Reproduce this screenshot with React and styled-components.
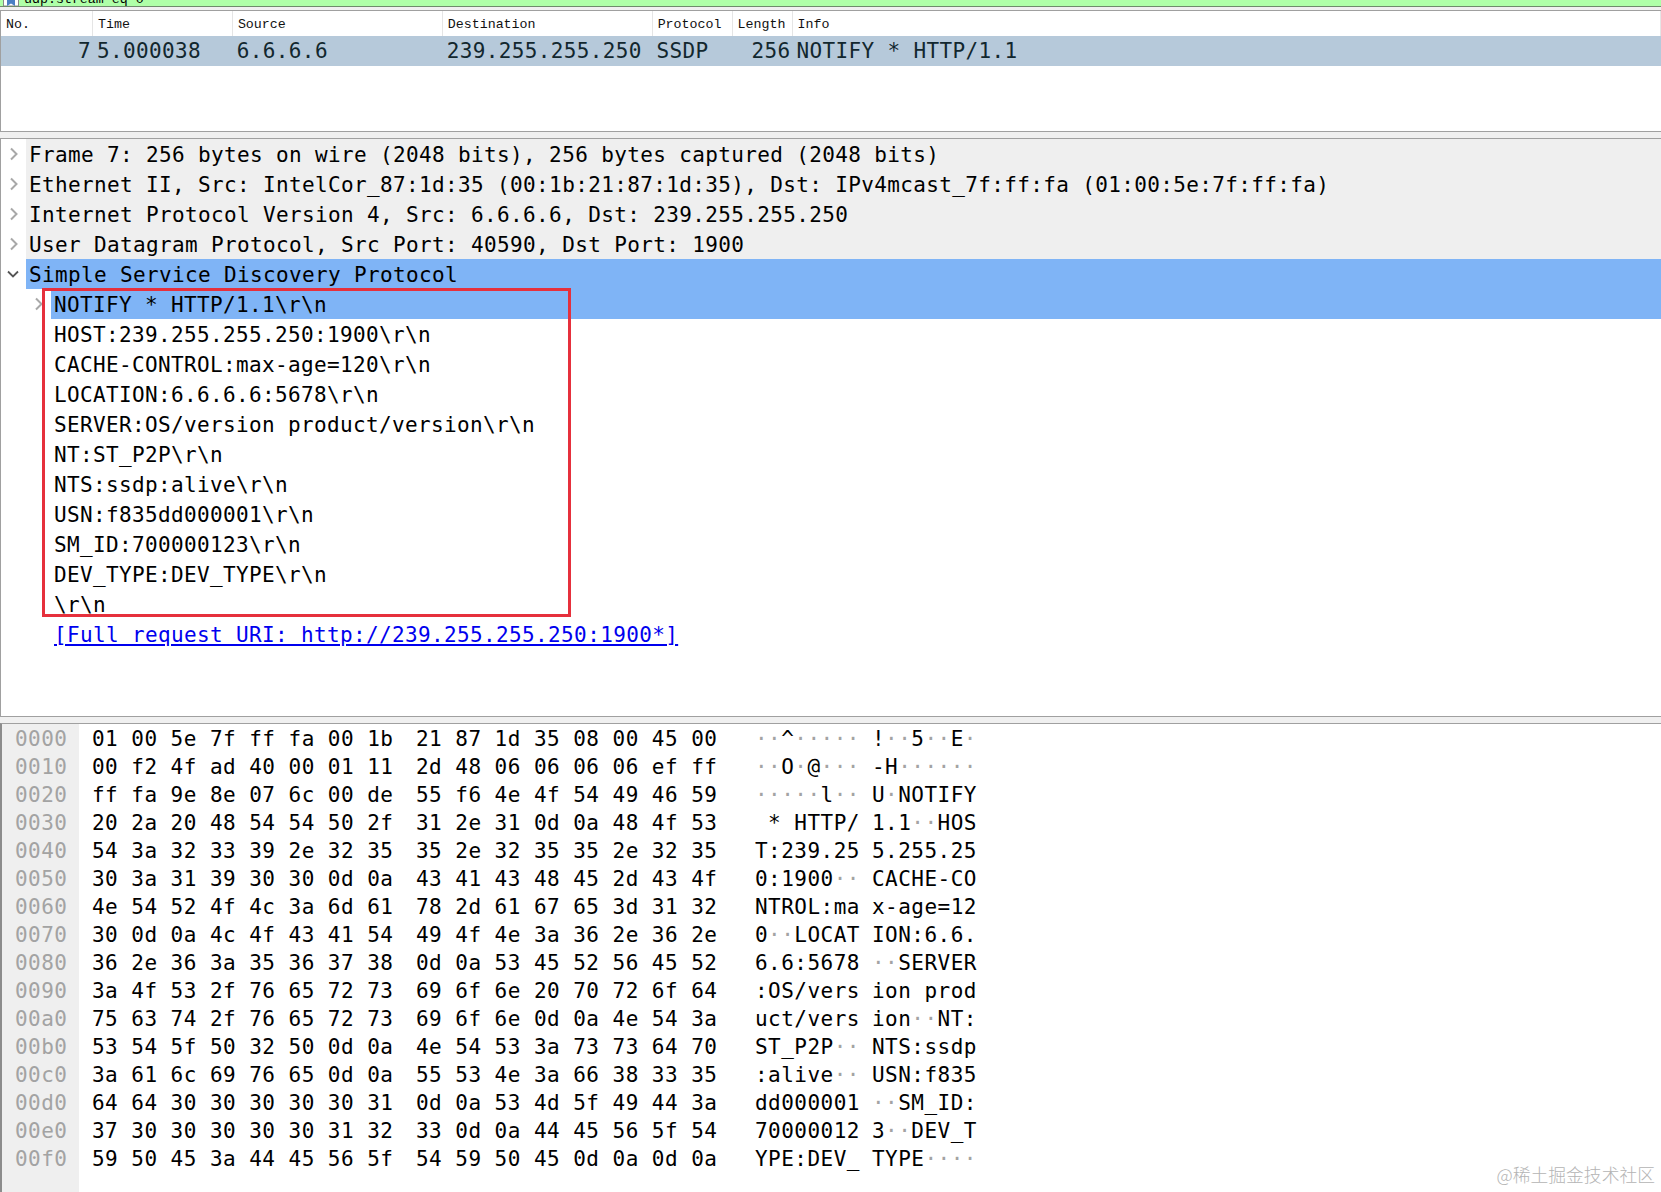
import React from 'react'
import styled, { createGlobalStyle } from 'styled-components'

const MONO = `'DejaVu Sans Mono', 'Liberation Mono', monospace`

const columns = [
  { label: 'No.', width: 92, value: '7', right: true },
  { label: 'Time', width: 140, value: '5.000038' },
  { label: 'Source', width: 210, value: '6.6.6.6' },
  { label: 'Destination', width: 210, value: '239.255.255.250' },
  { label: 'Protocol', width: 80, value: 'SSDP' },
  { label: 'Length', width: 60, value: '256', right: true },
  { label: 'Info', width: 869, value: 'NOTIFY * HTTP/1.1' },
]

const topRows = [
  'Frame 7: 256 bytes on wire (2048 bits), 256 bytes captured (2048 bits)',
  'Ethernet II, Src: IntelCor_87:1d:35 (00:1b:21:87:1d:35), Dst: IPv4mcast_7f:ff:fa (01:00:5e:7f:ff:fa)',
  'Internet Protocol Version 4, Src: 6.6.6.6, Dst: 239.255.255.250',
  'User Datagram Protocol, Src Port: 40590, Dst Port: 1900',
]

const headerLines = [
  'HOST:239.255.255.250:1900\\r\\n',
  'CACHE-CONTROL:max-age=120\\r\\n',
  'LOCATION:6.6.6.6:5678\\r\\n',
  'SERVER:OS/version product/version\\r\\n',
  'NT:ST_P2P\\r\\n',
  'NTS:ssdp:alive\\r\\n',
  'USN:f835dd000001\\r\\n',
  'SM_ID:700000123\\r\\n',
  'DEV_TYPE:DEV_TYPE\\r\\n',
  '\\r\\n',
]

const hexRows = [
  ['0000', '01 00 5e 7f ff fa 00 1b', '21 87 1d 35 08 00 45 00', '··^·····', '!··5··E·'],
  ['0010', '00 f2 4f ad 40 00 01 11', '2d 48 06 06 06 06 ef ff', '··O·@···', '-H······'],
  ['0020', 'ff fa 9e 8e 07 6c 00 de', '55 f6 4e 4f 54 49 46 59', '·····l··', 'U·NOTIFY'],
  ['0030', '20 2a 20 48 54 54 50 2f', '31 2e 31 0d 0a 48 4f 53', ' * HTTP/', '1.1··HOS'],
  ['0040', '54 3a 32 33 39 2e 32 35', '35 2e 32 35 35 2e 32 35', 'T:239.25', '5.255.25'],
  ['0050', '30 3a 31 39 30 30 0d 0a', '43 41 43 48 45 2d 43 4f', '0:1900··', 'CACHE-CO'],
  ['0060', '4e 54 52 4f 4c 3a 6d 61', '78 2d 61 67 65 3d 31 32', 'NTROL:ma', 'x-age=12'],
  ['0070', '30 0d 0a 4c 4f 43 41 54', '49 4f 4e 3a 36 2e 36 2e', '0··LOCAT', 'ION:6.6.'],
  ['0080', '36 2e 36 3a 35 36 37 38', '0d 0a 53 45 52 56 45 52', '6.6:5678', '··SERVER'],
  ['0090', '3a 4f 53 2f 76 65 72 73', '69 6f 6e 20 70 72 6f 64', ':OS/vers', 'ion prod'],
  ['00a0', '75 63 74 2f 76 65 72 73', '69 6f 6e 0d 0a 4e 54 3a', 'uct/vers', 'ion··NT:'],
  ['00b0', '53 54 5f 50 32 50 0d 0a', '4e 54 53 3a 73 73 64 70', 'ST_P2P··', 'NTS:ssdp'],
  ['00c0', '3a 61 6c 69 76 65 0d 0a', '55 53 4e 3a 66 38 33 35', ':alive··', 'USN:f835'],
  ['00d0', '64 64 30 30 30 30 30 31', '0d 0a 53 4d 5f 49 44 3a', 'dd000001', '··SM_ID:'],
  ['00e0', '37 30 30 30 30 30 31 32', '33 0d 0a 44 45 56 5f 54', '70000012', '3··DEV_T'],
  ['00f0', '59 50 45 3a 44 45 56 5f', '54 59 50 45 0d 0a 0d 0a', 'YPE:DEV_', 'TYPE····'],
]

const GlobalStyle = createGlobalStyle`
  html, body {
    margin: 0;
    padding: 0;
    background: #fff;
  }
`

const Window = styled.div`
  position: relative;
  width: 1661px;
  height: 1192px;
  overflow: hidden;
  display: flex;
  flex-direction: column;
  background: #f0f0f0;
  font-family: ${MONO};
  color: #000;
`

const FilterBar = styled.div`
  height: 6px;
  display: flex;
  align-items: flex-end;
  gap: 5px;
  padding-left: 3px;
  overflow: hidden;
  background: #afffa8;
  border-bottom: 1px solid #6f8a6c;
  font: 13.3px/13px 'Liberation Mono', monospace;
`

const FilterFlag = styled.svg`
  flex: none;
  width: 16px;
  height: 6px;
`

const PacketList = styled.section`
  margin-top: 3px;
  height: 120px;
  flex: none;
  background: #fff;
  border-top: 1px solid #a0a0a0;
  border-bottom: 1px solid #a0a0a0;
  border-left: 1px solid #a0a0a0;
`

const HeaderRow = styled.div`
  display: flex;
  height: 25px;
`

const HeaderCell = styled.div`
  box-sizing: border-box;
  width: ${p => p.$width}px;
  padding-left: 5px;
  border-right: 1px solid #e5e5e5;
  font: 13.3px/27px 'Liberation Mono', monospace;
  color: #111;
`

const PacketRow = styled.div`
  display: flex;
  height: 30px;
  background: #b6c9da;
  color: #12272e;
`

const PacketCell = styled.div`
  box-sizing: border-box;
  width: ${p => p.$width}px;
  padding: ${p => (p.$right ? '0 2px 0 0' : '0 0 0 4px')};
  text-align: ${p => (p.$right ? 'right' : 'left')};
  white-space: pre;
  font-size: 21px;
  letter-spacing: 0.36px;
  line-height: 30px;
`

const Details = styled.section`
  margin-top: 6px;
  height: 577px;
  flex: none;
  background: #fff;
  border-top: 1px solid #a0a0a0;
  border-bottom: 1px solid #a0a0a0;
  border-left: 1px solid #a0a0a0;
`

const TreeRow = styled.div`
  display: flex;
  align-items: center;
  height: 30px;
`

const Gutter = styled.div`
  flex: none;
  width: ${p => p.$width}px;
  display: flex;
  justify-content: flex-end;
  padding-right: ${p => p.$pad}px;
  box-sizing: border-box;
`

const Arrow = styled.svg`
  width: 10px;
  height: 14px;
  fill: none;
  stroke: #a8a8a8;
  stroke-width: 2;
`

const DownArrow = styled(Arrow)`
  width: 12px;
  stroke: #555;
  stroke-width: 1.8;
`

const Label = styled.div`
  flex: 1;
  height: 30px;
  padding-left: ${p => p.$pad}px;
  background: ${p => (p.$selected ? '#7fb4f6' : p.$top ? '#efefef' : 'transparent')};
  white-space: pre;
  font-size: 21px;
  letter-spacing: 0.36px;
  line-height: 33px;
`

const FullUri = styled.span`
  color: #0000ee;
  text-decoration: underline;
`

const RedBox = styled.div`
  position: absolute;
  left: 42px;
  top: 288px;
  width: 529px;
  height: 329px;
  box-sizing: border-box;
  border: 3px solid #e6303c;
  pointer-events: none;
`

const HexPane = styled.section`
  flex: 1;
  margin-top: 6px;
  display: flex;
  background: #fff;
  border-top: 1px solid #a0a0a0;
  border-left: 2px solid #8c8c8c;
`

const OffsetColumn = styled.div`
  flex: none;
  box-sizing: border-box;
  width: 77px;
  padding: 0 0 0 13px;
  background: #efefef;
  color: #a3a3a3;
`

const HexColumn = styled.div`
  flex: 1;
  padding-left: 13px;
`

const HexLine = styled.div`
  display: flex;
  height: 28px;
  white-space: pre;
  font-size: 21px;
  letter-spacing: 0.46px;
  line-height: 30px;
`

const HexGroup = styled.span`
  flex: none;
  width: ${p => p.$width}px;
`

const Dot = styled.span`
  color: #a3a3a3;
`

const Watermark = styled.div`
  position: absolute;
  right: 6px;
  bottom: 7px;
  font: 300 17.8px/22px 'Noto Sans CJK SC', sans-serif;
  color: #b4b4b4;
`

const Ascii = ({ text }) => (
  <>
    {text.split('').map((c, i) => (c === '·' ? <Dot key={i}>·</Dot> : c))}
  </>
)

const ChevronRight = () => (
  <Arrow viewBox="0 0 10 14">
    <path d="M2 1.5 L7.5 7 L2 12.5" />
  </Arrow>
)

const ChevronDown = () => (
  <DownArrow viewBox="0 0 12 14">
    <path d="M1 4.5 L6 9.5 L11 4.5" />
  </DownArrow>
)

export default function App() {
  return (
    <Window>
      <GlobalStyle />
      <FilterBar>
        <FilterFlag viewBox="0 0 16 6">
          <rect x="0.5" y="-2" width="15" height="8" fill="#fff" stroke="#888" />
          <path d="M4 0 H12 V6 L8 3.5 L4 6 Z" fill="#4a7fc4" />
        </FilterFlag>
        <span>udp.stream eq 0</span>
      </FilterBar>

      <PacketList>
        <HeaderRow>
          {columns.map(c => (
            <HeaderCell key={c.label} $width={c.width}>{c.label}</HeaderCell>
          ))}
        </HeaderRow>
        <PacketRow>
          {columns.map(c => (
            <PacketCell key={c.label} $width={c.width} $right={c.right}>{c.value}</PacketCell>
          ))}
        </PacketRow>
      </PacketList>

      <Details>
        {topRows.map(text => (
          <TreeRow key={text}>
            <Gutter $width={25} $pad={7}><ChevronRight /></Gutter>
            <Label $top $pad={3}>{text}</Label>
          </TreeRow>
        ))}
        <TreeRow>
          <Gutter $width={25} $pad={7}><ChevronDown /></Gutter>
          <Label $selected $pad={3}>Simple Service Discovery Protocol</Label>
        </TreeRow>
        <TreeRow>
          <Gutter $width={50} $pad={7}><ChevronRight /></Gutter>
          <Label $selected $pad={3}>NOTIFY * HTTP/1.1\r\n</Label>
        </TreeRow>
        {headerLines.map(text => (
          <TreeRow key={text}>
            <Gutter $width={50} $pad={0} />
            <Label $pad={3}>{text}</Label>
          </TreeRow>
        ))}
        <TreeRow>
          <Gutter $width={50} $pad={0} />
          <Label $pad={3}><FullUri>[Full request URI: http://239.255.255.250:1900*]</FullUri></Label>
        </TreeRow>
      </Details>

      <HexPane>
        <OffsetColumn>
          {hexRows.map(r => <HexLine key={r[0]}>{r[0]}</HexLine>)}
        </OffsetColumn>
        <HexColumn>
          {hexRows.map(r => (
            <HexLine key={r[0]}>
              <HexGroup $width={324}>{r[1]}</HexGroup>
              <HexGroup $width={339}>{r[2]}</HexGroup>
              <HexGroup $width={117}><Ascii text={r[3]} /></HexGroup>
              <HexGroup $width={110}><Ascii text={r[4]} /></HexGroup>
            </HexLine>
          ))}
        </HexColumn>
      </HexPane>

      <RedBox />
      <Watermark>@稀土掘金技术社区</Watermark>
    </Window>
  )
}
